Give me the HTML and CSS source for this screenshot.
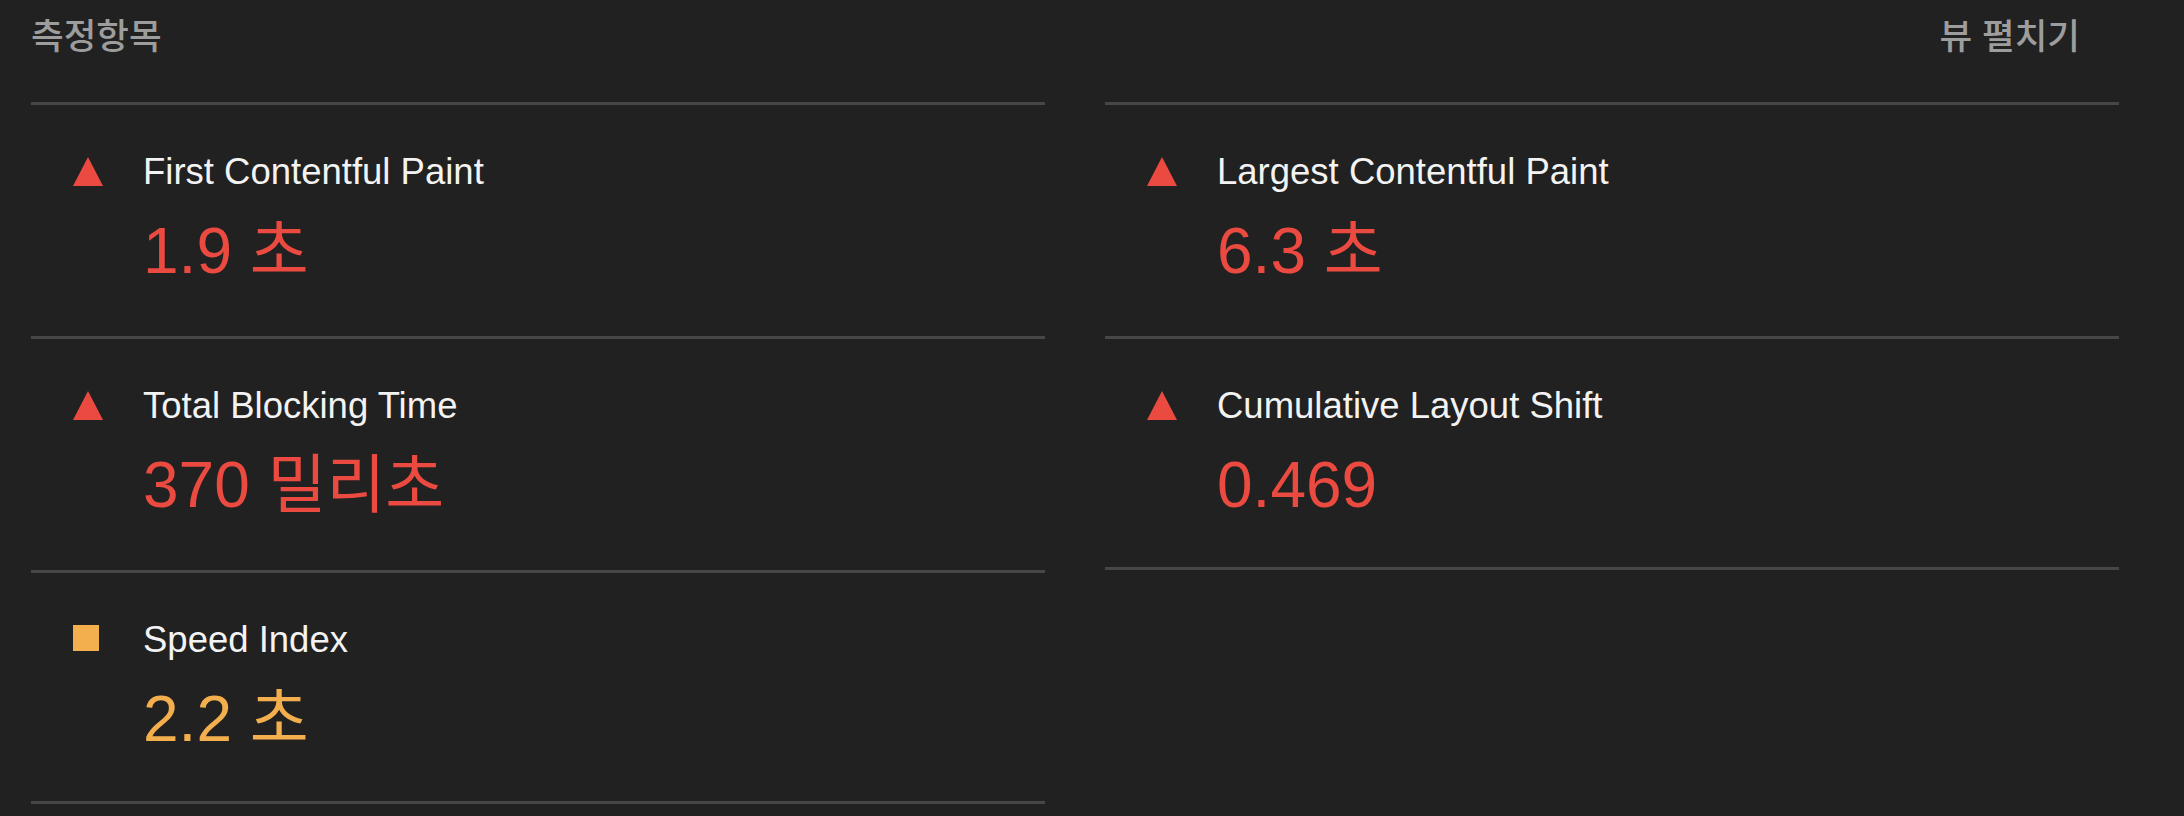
FILE: index.html
```html
<!DOCTYPE html>
<html lang="ko">
<head>
<meta charset="utf-8">
<title>측정항목</title>
<link rel="stylesheet" href="styles.css">
</head>
<body>
<section class="metrics">
  <header class="metrics-header">
    <span class="metrics-title">측정항목</span>
    <span class="metrics-toggle">뷰 펼치기</span>
  </header>
  <div class="metrics-grid">
    <div class="metrics-col">
      <div class="metric">
        <svg class="metric-icon" viewBox="0 0 30 30" width="30" height="30"><polygon class="fail" points="15,0 30,29 0,29"/></svg>
        <div class="metric-body">
          <div class="metric-name">First Contentful Paint</div>
          <div class="metric-value fail-text">1.9 초</div>
        </div>
      </div>
      <div class="metric">
        <svg class="metric-icon" viewBox="0 0 30 30" width="30" height="30"><polygon class="fail" points="15,0 30,29 0,29"/></svg>
        <div class="metric-body">
          <div class="metric-name">Total Blocking Time</div>
          <div class="metric-value fail-text">370 밀리초</div>
        </div>
      </div>
      <div class="metric">
        <svg class="metric-icon" viewBox="0 0 30 30" width="30" height="30"><rect class="average" x="0" y="0" width="26" height="26"/></svg>
        <div class="metric-body">
          <div class="metric-name">Speed Index</div>
          <div class="metric-value average-text">2.2 초</div>
        </div>
      </div>
    </div>
    <div class="metrics-col">
      <div class="metric">
        <svg class="metric-icon" viewBox="0 0 30 30" width="30" height="30"><polygon class="fail" points="15,0 30,29 0,29"/></svg>
        <div class="metric-body">
          <div class="metric-name">Largest Contentful Paint</div>
          <div class="metric-value fail-text">6.3 초</div>
        </div>
      </div>
      <div class="metric">
        <svg class="metric-icon" viewBox="0 0 30 30" width="30" height="30"><polygon class="fail" points="15,0 30,29 0,29"/></svg>
        <div class="metric-body">
          <div class="metric-name">Cumulative Layout Shift</div>
          <div class="metric-value fail-text">0.469</div>
        </div>
      </div>
    </div>
  </div>
</section>
</body>
</html>
```

FILE: styles.css
```css
html, body {
  margin: 0;
  padding: 0;
  background: #212121;
}

body {
  font-family: "Liberation Sans", "Noto Sans CJK KR", Arial, sans-serif;
  color: #f1f1f1;
  width: 2184px;
  height: 816px;
  overflow: hidden;
}

.metrics {
  padding-left: 31px;
  width: 2088px;
}

.metrics-header {
  display: flex;
  justify-content: space-between;
  align-items: flex-start;
  height: 102px;
  padding-right: 39px;
  box-sizing: border-box;
  font-family: "Noto Sans CJK KR", "Liberation Sans", sans-serif;
  font-size: 35.5px;
  font-weight: 500;
  line-height: 40px;
  color: #9d9d9d;
  padding-top: 14px;
}

.metrics-grid {
  display: grid;
  grid-template-columns: 1014px 1014px;
  column-gap: 60px;
}

.metrics-col {
  display: flex;
  flex-direction: column;
}

.metric {
  box-sizing: border-box;
  height: 234px;
  border-top: 3px solid #474747;
  display: flex;
  align-items: flex-start;
  padding-top: 47px;
  padding-left: 42px;
}

.metric:last-child {
  border-bottom: 3px solid #474747;
}

.metric-icon {
  flex: none;
  margin-top: 5px;
  margin-right: 40px;
}

.fail { fill: #eb4a40; }
.average { fill: #f3ae4d; }

.metric-name {
  font-size: 36.5px;
  line-height: 40px;
  color: #f3f3f3;
}

.metric-value {
  font-size: 64px;
  line-height: 72px;
  margin-top: 23px;
}

.fail-text { color: #eb4a40; }
.average-text { color: #f3ae4d; }
```
